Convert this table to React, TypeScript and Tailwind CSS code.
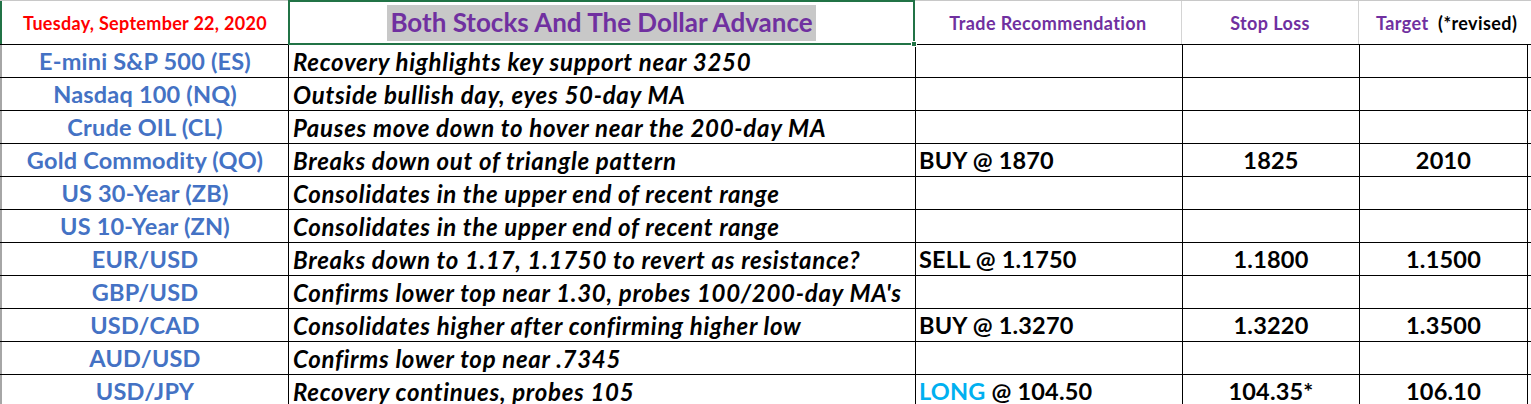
import React from 'react'

interface Row {
  name: string
  note: string
  trade?: React.ReactNode
  stop?: string
  target?: string
}

const rows: Row[] = [
  { name: 'E-mini S&P 500 (ES)', note: 'Recovery highlights key support near 3250' },
  { name: 'Nasdaq 100 (NQ)', note: 'Outside bullish day, eyes 50-day MA' },
  { name: 'Crude OIL (CL)', note: 'Pauses move down to hover near the 200-day MA' },
  { name: 'Gold Commodity (QO)', note: 'Breaks down out of triangle pattern', trade: 'BUY @ 1870', stop: '1825', target: '2010' },
  { name: 'US 30-Year (ZB)', note: 'Consolidates in the upper end of recent range' },
  { name: 'US 10-Year (ZN)', note: 'Consolidates in the upper end of recent range' },
  { name: 'EUR/USD', note: 'Breaks down to 1.17, 1.1750 to revert as resistance?', trade: 'SELL @ 1.1750', stop: '1.1800', target: '1.1500' },
  { name: 'GBP/USD', note: "Confirms lower top near 1.30, probes 100/200-day MA's" },
  { name: 'USD/CAD', note: 'Consolidates higher after confirming higher low', trade: 'BUY @ 1.3270', stop: '1.3220', target: '1.3500' },
  { name: 'AUD/USD', note: 'Confirms lower top near .7345' },
  {
    name: 'USD/JPY',
    note: 'Recovery continues, probes 105',
    trade: (
      <>
        <span className="text-[#00b0f0]">LONG</span>
        {' @ 104.50'}
      </>
    ),
    stop: '104.35*',
    target: '106.10',
  },
]

export default function App() {
  return (
    <div className="w-[1531px] h-[404px] overflow-hidden bg-white font-[Lato,sans-serif] font-bold">
      <div className="flex flex-col border-t border-[#c8c8c8]">
        {/* Header */}
        <div className="flex h-[44px] border-b border-black">
          <div className="w-[2px] h-full bg-[#217346]" />
          <div className="w-[287px] flex items-center justify-center pt-[1px] text-[#ff0000] text-[18px] tracking-[0.3px] border-r border-[#d4d4d4]">
            Tuesday, September 22, 2020
          </div>
          <div className="relative w-[627px] -ml-px -mt-px h-[45px] border-2 border-[#217346] flex items-center justify-center">
            <span className="bg-[#c8c8c8] text-[#7030a0] text-[26px] h-[36px] flex items-center px-[3px]">
              Both Stocks And The Dollar Advance
            </span>
            <div className="absolute -right-[4px] -bottom-[4px] w-[6px] h-[6px] bg-[#217346] border border-white" />
          </div>
          <div className="w-[267px] flex items-center justify-center pt-[1px] text-[#7030a0] text-[18px] tracking-[0.4px] border-r border-[#d4d4d4]">
            Trade Recommendation
          </div>
          <div className="w-[177px] flex items-center justify-center pt-[1px] text-[#7030a0] text-[18px] tracking-[0.4px] border-r border-[#d4d4d4]">
            Stop Loss
          </div>
          <div className="w-[168px] flex items-center pl-[17px] pt-[1px] text-[18px] tracking-[0.4px] whitespace-pre">
            <span className="text-[#7030a0]">Target</span>
            <span className="text-black">{'  (*revised)'}</span>
          </div>
        </div>

        {rows.map((r) => (
          <div key={r.name} className="flex h-[33px] border-b border-black">
            <div className="w-[2px] h-full bg-[#a6a6a6]" />
            <div className="w-[287px] flex items-center justify-center pt-[2px] text-[#4472c4] text-[23.5px] tracking-[0.2px] border-r border-black whitespace-nowrap">
              {r.name}
            </div>
            <div className="w-[627px] flex items-center pl-[4px] pt-[2px] italic text-black text-[24px] tracking-[0.7px] border-r border-black whitespace-nowrap overflow-hidden">
              {r.note}
            </div>
            <div className="w-[267px] flex items-center pl-[3px] pt-[2px] text-black text-[23.5px] tracking-[0.2px] border-r border-black whitespace-pre">
              {r.trade}
            </div>
            <div className="w-[177px] flex items-center justify-center pt-[2px] text-black text-[23.5px] tracking-[0.2px] border-r border-black">
              {r.stop}
            </div>
            <div className="w-[168px] flex items-center justify-center pt-[2px] text-black text-[23.5px] tracking-[0.2px] border-r border-black">
              {r.target}
            </div>
          </div>
        ))}
      </div>
    </div>
  )
}
